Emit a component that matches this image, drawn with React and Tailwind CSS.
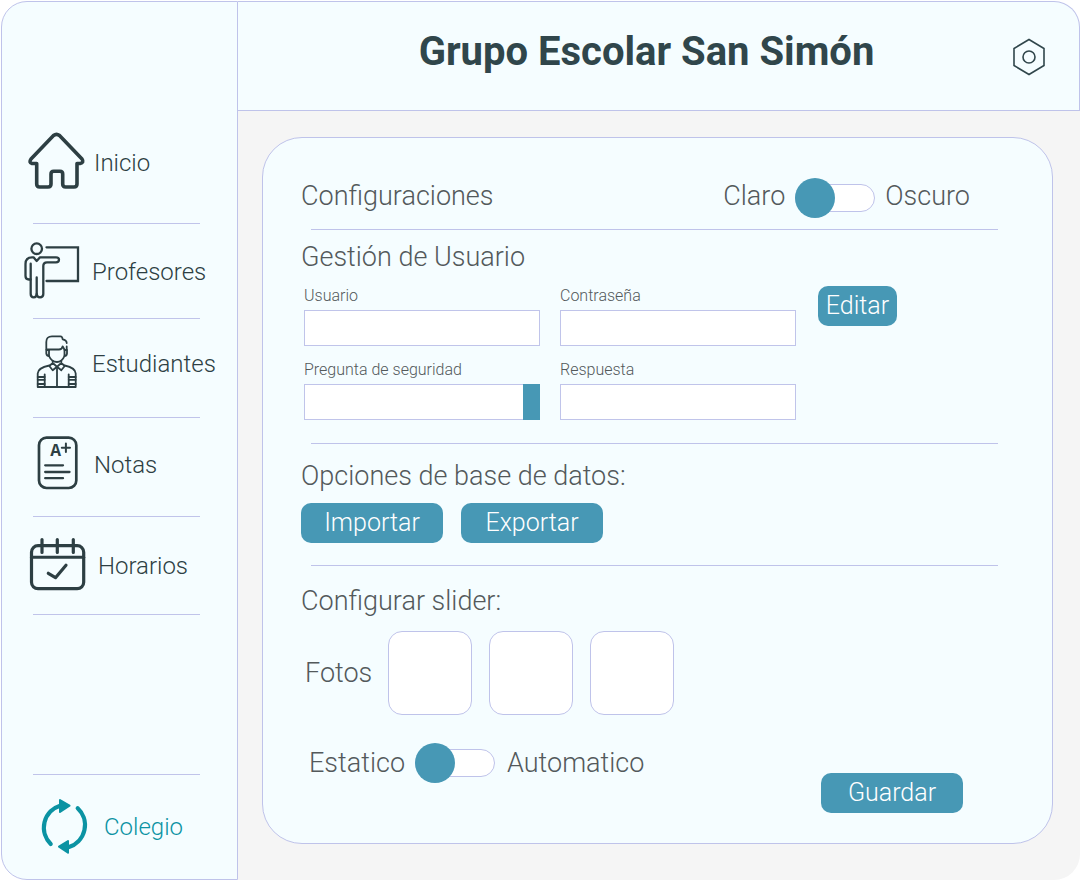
import React from "react";

function Icon({ children, strokeWidth }) {
  return (
    <svg
      viewBox="0 0 64 64"
      className="size-16 shrink-0"
      fill="none"
      stroke="currentColor"
      strokeWidth={strokeWidth}
      strokeLinecap="round"
      strokeLinejoin="round"
      aria-hidden="true"
    >
      {children}
    </svg>
  );
}

function HomeIcon() {
  return (
    <Icon strokeWidth={3.6}>
      <path d="M29.5 6.5 7 30Q4.5 33.5 8 34.5H12.7V55Q12.7 58 15.7 58H24Q27 58 27 55V45Q27 42.3 29.7 42.3H36Q38.7 42.3 38.7 45V55Q38.7 58 41.7 58H50Q53 58 53 55V34.5H56Q60.5 33.5 58 30L35.5 6.5Q32.5 4.2 29.5 6.5Z" />
    </Icon>
  );
}

function TeacherIcon() {
  return (
    <Icon strokeWidth={2.3}>
      <circle cx="12.7" cy="10.7" r="5.3" />
      <path d="M22.5 9.3H54V43H22.5" strokeLinejoin="miter" />
      <path d="M6.7 41.5H5Q1.5 41.5 1.5 38V26Q1.5 19.3 8 19.3H9.5L12.7 23 16 19.3H32Q35 19.3 35 21.8 35 24.3 32 24.3H23Q19.3 24.3 19.3 28V56Q19.3 59.3 16 59.3 12.7 59.3 12.7 56V39.5" />
      <path d="M6.7 25.7V56Q6.7 59.3 9.7 59.3 12.7 59.3 12.7 56" />
    </Icon>
  );
}

function StudentIcon() {
  return (
    <Icon strokeWidth={1.8}>
      <path d="M22.3 19.5V12Q22.3 6.3 28 6.3H36.5Q38.3 6.3 38.7 9.3 42.5 10 42.7 13M42.7 16.5V20M22.3 19.5H35Q38 19.5 38.6 16.3L40.7 20" />
      <path d="M25 20V26Q27.5 32 33 32 38 32 40.5 26V20" />
      <path d="M25 20H22.3V23.5Q22.8 26 25 26M40.7 20H43V23.5Q42.6 26 40.5 26" />
      <path d="M28.7 30.8V33L25.3 36 28.7 40.3 33 36.7 37.3 40.3 40.7 36 37.3 33V30.8M28.7 33 33 36.7 37.3 33" />
      <path d="M25.3 35.5Q13.7 38 13.7 43.5V57H51.7V43.5Q51.7 38 40.7 35.5M33 37V57M20.7 44.3V57M44.7 44.3V57" />
      <path d="M13.7 47H20.7M13.7 49.8H20.7M13.7 54H20.7M44.7 47H51.7M44.7 49.8H51.7M44.7 54H51.7" />
    </Icon>
  );
}

function GradesIcon() {
  return (
    <Icon strokeWidth={2.7}>
      <rect x="15" y="6.7" width="37.3" height="50.3" rx="7.5" />
      <text
        x="26.3"
        y="25.3"
        fontSize="18"
        fontWeight="700"
        fontFamily="Liberation Mono, monospace"
        fill="currentColor"
        stroke="none"
      >
        A
      </text>
      <path d="M37.8 16.7H46M41.9 12.5V21" strokeWidth="2" />
      <path d="M21.2 34.3H39M21.2 41H45.5M21.2 47.2H39" strokeWidth="2.3" />
    </Icon>
  );
}

function CalendarIcon() {
  return (
    <Icon strokeWidth={3.2}>
      <rect x="7.5" y="13.7" width="52.2" height="43" rx="6.5" />
      <path d="M7.5 25.3H59.7" strokeWidth="3" />
      <path d="M18 7.5V20.5M33.3 7.5V20.5M49.3 7.5V20.5" />
      <path d="M24.3 41.3 31.5 45.7 42 33.3" />
    </Icon>
  );
}

function SyncIcon() {
  return (
    <Icon strokeWidth={4.2}>
      <path d="M18.7 49A23 23 0 0 1 28 10.7M45.7 13.3A23 23 0 0 1 37 52" />
      <path
        d="M28 5 37.5 10.7 28 17ZM36 46 27 51.7 36 57.7Z"
        fill="currentColor"
        strokeWidth="2"
      />
    </Icon>
  );
}

const navItems = [
  { label: "Inicio", icon: HomeIcon, row: "h-[99px] pb-7 gap-1.5" },
  { label: "Profesores", icon: TeacherIcon, row: "h-[95px] pb-1 gap-1" },
  { label: "Estudiantes", icon: StudentIcon, row: "h-[99px] pb-3.5 gap-1" },
  { label: "Notas", icon: GradesIcon, row: "h-[99px] pb-2.5 gap-1.5" },
  { label: "Horarios", icon: CalendarIcon, row: "h-[98px] pb-1 gap-2.5" },
];

function Sidebar() {
  return (
    <aside className="flex w-[237px] shrink-0 flex-col rounded-l-[26px] border border-[#bfc3ea] bg-[#f5fdff]">
      <nav className="mt-[123px] text-[#2d3f43]">
        <ul>
          {navItems.map(({ label, icon: Glyph, row }) => (
            <li key={label}>
              <a href="#" className={`flex items-center pl-[22px] text-2xl font-light ${row}`}>
                <Glyph />
                <span className="pt-1">{label}</span>
              </a>
              <div className="-mt-px mr-[37px] ml-[31px] h-px bg-[#c0c4ea]" />
            </li>
          ))}
        </ul>
      </nav>
      <div className="mt-auto pb-5">
        <div className="mr-[37px] ml-[31px] h-px bg-[#c0c4ea]" />
        <a
          href="#"
          className="mt-5 flex items-center gap-2 pl-[30px] text-2xl font-light text-[#0b93a3]"
        >
          <SyncIcon />
          Colegio
        </a>
      </div>
    </aside>
  );
}

function Header() {
  return (
    <header className="flex h-[110px] items-center rounded-tr-[26px] border-t border-r border-b border-[#bfc3ea] bg-[#f5fdff] pr-8 pl-11">
      <h1 className="flex-1 pb-2 text-center text-[40px] leading-12 font-bold text-[#30464b]">
        Grupo Escolar San Simón
      </h1>
      <button type="button" aria-label="Ajustes" className="mt-0.5 text-[#30464b]">
        <svg
          viewBox="0 0 36 40"
          className="h-10 w-9"
          fill="none"
          stroke="currentColor"
          strokeWidth="1.6"
          aria-hidden="true"
        >
          <path d="M18 2.5 33 11.5V28.5L18 37.5 3 28.5V11.5Z" />
          <circle cx="18" cy="20" r="6" />
        </svg>
      </button>
    </header>
  );
}

function Toggle({ id }) {
  return (
    <span className="relative flex h-10 w-20 shrink-0 items-center">
      <input
        id={id}
        type="checkbox"
        role="switch"
        className="peer h-7 w-full appearance-none rounded-full border border-[#bfc3ea] bg-white"
      />
      <span className="pointer-events-none absolute top-0 left-0 size-10 rounded-full bg-[#4798b5] peer-checked:translate-x-10" />
    </span>
  );
}

function Button({ children, className }) {
  return (
    <button
      type="button"
      className={`h-10 rounded-[10px] bg-[#4798b5] text-[25px] leading-8 font-light text-white ${className}`}
    >
      {children}
    </button>
  );
}

function Field({ id, label, children }) {
  return (
    <div className="flex flex-col gap-1">
      <label htmlFor={id} className="text-base leading-5 font-light">
        {label}
      </label>
      {children}
    </div>
  );
}

function Divider() {
  return <hr className="mr-[54px] ml-[10px] border-t border-[#bfc3ea]" />;
}

const inputStyle = "h-9 w-full appearance-none border border-[#c0c4ea] bg-white px-2";

function SettingsCard() {
  return (
    <form className="flex-1 rounded-[40px] border border-[#bfc3ea] bg-[#f5fdff] pt-10 pb-[30px] pl-[38px] text-[27px] leading-8 font-light text-[#53595b]">
      <div className="mb-[11px] flex items-center justify-between pr-[82px]">
        <h2 className="pb-1">Configuraciones</h2>
        <div className="flex items-center gap-2.5">
          <label htmlFor="theme" className="pb-1">
            Claro
          </label>
          <Toggle id="theme" />
          <label htmlFor="theme" className="pb-1">
            Oscuro
          </label>
        </div>
      </div>
      <Divider />

      <section className="mt-[11px] mb-[23px]">
        <h2>Gestión de Usuario</h2>
        <div className="mt-[13px] ml-[3px] flex items-start gap-[22px]">
          <div className="grid w-[492px] grid-cols-2 gap-x-5 gap-y-3.5">
            <Field id="user" label="Usuario">
              <input id="user" type="text" className={inputStyle} />
            </Field>
            <Field id="password" label="Contraseña">
              <input id="password" type="password" className={inputStyle} />
            </Field>
            <Field id="question" label="Pregunta de seguridad">
              <span className="relative flex">
                <select id="question" className={inputStyle} />
                <span className="pointer-events-none absolute inset-y-0 right-0 w-[17px] bg-[#4798b5]" />
              </span>
            </Field>
            <Field id="answer" label="Respuesta">
              <input id="answer" type="text" className={inputStyle} />
            </Field>
          </div>
          <Button className="w-[79px]">Editar</Button>
        </div>
      </section>
      <Divider />

      <section className="mt-4 mb-[22px]">
        <h2>Opciones de base de datos:</h2>
        <div className="mt-[11px] flex gap-[18px]">
          <Button className="w-[142px]">Importar</Button>
          <Button className="w-[142px]">Exportar</Button>
        </div>
      </section>
      <Divider />

      <section className="mt-[19px]">
        <h2>Configurar slider:</h2>
        <div className="mt-3.5 flex items-center gap-4 pl-1">
          <h3>Fotos</h3>
          <div className="flex gap-[17px]">
            {[1, 2, 3].map((n) => (
              <button
                key={n}
                type="button"
                aria-label={`Foto ${n}`}
                className="size-[84px] rounded-[14px] border border-[#bfc3ea] bg-white"
              />
            ))}
          </div>
        </div>
        <div className="mt-7 flex items-start justify-between pr-[89px] pl-2">
          <div className="flex items-center gap-2.5">
            <label htmlFor="mode">Estatico</label>
            <Toggle id="mode" />
            <label htmlFor="mode" className="pl-0.5">
              Automatico
            </label>
          </div>
          <Button className="mt-[30px] w-[142px]">Guardar</Button>
        </div>
      </section>
    </form>
  );
}

export default function App() {
  return (
    <div className="flex min-h-screen bg-white pt-px pl-px font-['Roboto',sans-serif]">
      <Sidebar />
      <div className="flex min-w-0 flex-1 flex-col">
        <Header />
        <main className="flex flex-1 rounded-br-[26px] bg-[#f5f5f5] pt-[26px] pr-[27px] pb-9 pl-6">
          <SettingsCard />
        </main>
      </div>
    </div>
  );
}
